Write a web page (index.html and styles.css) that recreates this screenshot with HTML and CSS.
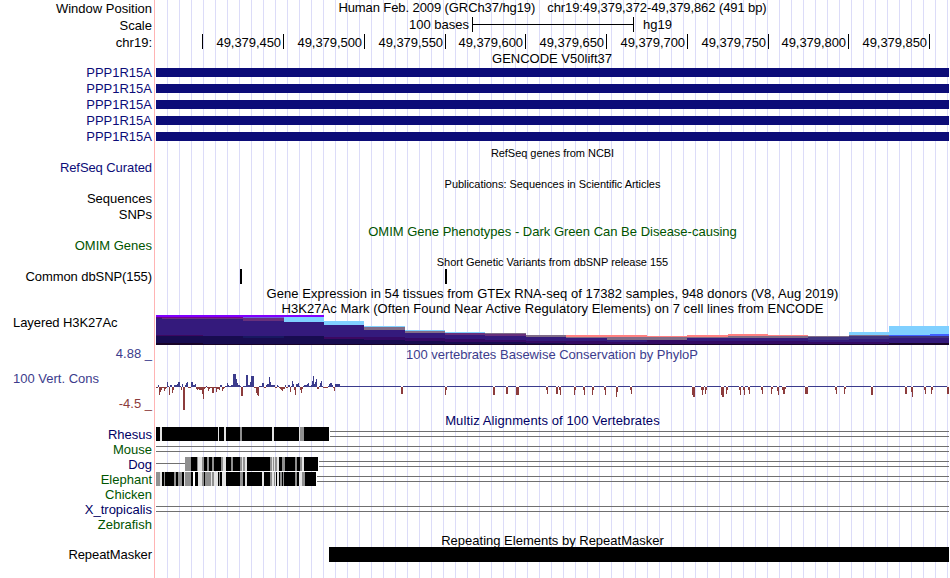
FILE: index.html
```
<!DOCTYPE html>
<html lang="en">
<head>
  <meta charset="utf-8">
  <title>Human chr19:49,379,372-49,379,862</title>
  <link rel="stylesheet" href="styles.css">
</head>
<body>
  <main class="browser">
    <!-- position and ruler -->
    <div class="row h17"><span class="label">Window Position</span><div class="track title position"><span>Human Feb. 2009 (GRCh37/hg19)</span><span>chr19:49,379,372-49,379,862 (491 bp)</span></div></div>
    <div class="row h17"><span class="label">Scale</span><div class="track scale"><span>100 bases</span><i class="scale-bar"></i><span>hg19</span></div></div>
    <div class="row h17"><span class="label">chr19:</span><div class="track ruler" id="ruler"></div></div>

    <!-- genes -->
    <div class="row h13"><span class="label"></span><div class="track title gencode">GENCODE V50lift37</div></div>
    <div class="row h16 gene"><span class="label">PPP1R15A</span><div class="track"><i class="exon"></i></div></div>
    <div class="row h16 gene"><span class="label">PPP1R15A</span><div class="track"><i class="exon"></i></div></div>
    <div class="row h16 gene"><span class="label">PPP1R15A</span><div class="track"><i class="exon"></i></div></div>
    <div class="row h16 gene"><span class="label">PPP1R15A</span><div class="track"><i class="exon"></i></div></div>
    <div class="row h16 gene"><span class="label">PPP1R15A</span><div class="track"><i class="exon"></i></div></div>
    <div class="row h16"><span class="label"></span><div class="track title small">RefSeq genes from NCBI</div></div>
    <div class="row h15 gene"><span class="label tight">RefSeq Curated</span><div class="track"></div></div>
    <div class="row h16"><span class="label"></span><div class="track title small">Publications: Sequences in Scientific Articles</div></div>
    <div class="row h15"><span class="label">Sequences</span><div class="track"></div></div>
    <div class="row h16"><span class="label">SNPs</span><div class="track"></div></div>
    <div class="row h16 green"><span class="label"></span><div class="track title low-title">OMIM Gene Phenotypes - Dark Green Can Be Disease-causing</div></div>
    <div class="row h15 green"><span class="label">OMIM Genes</span><div class="track"></div></div>
    <div class="row h16"><span class="label"></span><div class="track title small">Short Genetic Variants from dbSNP release 155</div></div>
    <div class="row h15"><span class="label tight">Common dbSNP(155)</span><div class="track snps"><i></i><i></i></div></div>
    <div class="row h16"><span class="label"></span><div class="track title low-title wide">Gene Expression in 54 tissues from GTEx RNA-seq of 17382 samples, 948 donors (V8, Aug 2019)</div></div>
    <div class="row h15"><span class="label"></span><div class="track title low-title wide">H3K27Ac Mark (Often Found Near Active Regulatory Elements) on 7 cell lines from ENCODE</div></div>

    <!-- signal tracks -->
    <div class="row h30"><span class="label left">Layered H3K27Ac</span><svg class="plot" id="layers" width="794" height="30" viewBox="156 315 794 30"></svg></div>
    <div class="row h18 cons"><span class="label">4.88 _</span><div class="track title low-title phylop-title">100 vertebrates Basewise Conservation by PhyloP</div></div>
    <div class="row h50 cons">
      <div class="label cons-label"><span class="name">100 Vert. Cons</span><span class="low">-4.5 _</span></div>
      <svg class="plot" id="phylop" width="794" height="50" viewBox="156 363 794 50"></svg>
    </div>

    <!-- alignments -->
    <div class="row h14 navy"><span class="label"></span><div class="track title multiz">Multiz Alignments of 100 Vertebrates</div></div>
    <div class="row h15 navy"><span class="label">Rhesus</span><svg class="plot align" data-species="rhesus" width="794" height="15" viewBox="156 0 794 15"></svg></div>
    <div class="row h15 green"><span class="label">Mouse</span><svg class="plot align" data-species="mouse" width="794" height="15" viewBox="156 0 794 15"></svg></div>
    <div class="row h15 navy"><span class="label">Dog</span><svg class="plot align" data-species="dog" width="794" height="15" viewBox="156 0 794 15"></svg></div>
    <div class="row h15 green"><span class="label">Elephant</span><svg class="plot align" data-species="elephant" width="794" height="15" viewBox="156 0 794 15"></svg></div>
    <div class="row h15 green"><span class="label">Chicken</span><div class="track"></div></div>
    <div class="row h15 navy"><span class="label">X_tropicalis</span><svg class="plot align" data-species="frog" width="794" height="15" viewBox="156 0 794 15"></svg></div>
    <div class="row h15 green"><span class="label">Zebrafish</span><div class="track"></div></div>
    <div class="row h15"><span class="label"></span><div class="track title low-title">Repeating Elements by RepeatMasker</div></div>
    <div class="row h15"><span class="label tight">RepeatMasker</span><div class="track"><i class="repeat-bar"></i></div></div>
  </main>
  <script src="tracks.js"></script>
</body>
</html>
```
FILE: styles.css
```
* {
  box-sizing: border-box;
}

body {
  margin: 0;
  background: white;
  font-family: "Liberation Sans", Arial, sans-serif;
  font-size: 13px;
  color: black;
}

.browser {
  width: 950px;
  height: 578px;
  overflow: hidden;
  /* red edge, then a guide every 12px */
  background:
    linear-gradient(#ffb4b4, #ffb4b4) 154px 0 / 1px 100% no-repeat,
    repeating-linear-gradient(to right, #dcdcf8 0, #dcdcf8 1px, transparent 1px, transparent 12px) 167px 0 / 782px 100% no-repeat;
}

.row {
  display: grid;
  grid-template-columns: 152px 794px;
  column-gap: 4px;
  white-space: nowrap;
}

.h13 { height: 13px; line-height: 15px; }
.h14 { height: 14px; line-height: 15px; }
.h15 { height: 15px; line-height: 15px; }
.h16 { height: 16px; line-height: 17px; }
.h17 { height: 17px; line-height: 17px; }
.h18 { height: 18px; line-height: 18px; }
.h30 { height: 30px; }
.h50 { height: 50px; }

.label {
  text-align: right;
}

.tight {
  letter-spacing: -0.08px;
}

.title {
  text-align: center;
  padding-right: 1px;
}

.small {
  font-size: 11px;
  line-height: 18px;
  letter-spacing: -0.04px;
}

.low-title { line-height: 19px; }
.h15 .low-title { line-height: 17px; }
.wide { letter-spacing: 0.05px; }
.multiz { letter-spacing: 0.1px; }
.gencode { padding-right: 2px; }
.phylop-title { padding-right: 2px; }

.navy { color: #000064; }
.green { color: #005400; }
.gene { color: #0c0c78; }
.cons { color: #3c3c8c; }

.position {
  display: flex;
  justify-content: center;
  gap: 12px;
  line-height: 15px;
  letter-spacing: -0.09px;
}

.scale {
  display: flex;
  padding-left: 253px;
  line-height: 15px;
}

.scale-bar {
  width: 162px;
  height: 15px;
  margin: 0 9px 0 3px;
  border: solid black;
  border-width: 0 1px;
  background: linear-gradient(black, black) 0 7px / 100% 1px no-repeat;
}

.ruler {
  display: flex;
}

.tick {
  text-align: right;
  line-height: 17px;
  height: 15px;
  padding-right: 2px;
  border-right: 1px solid black;
  letter-spacing: -0.06px;
}

.exon {
  display: block;
  width: 793px;
  height: 9px;
  margin-top: 4px;
  background: #0c0c78;
}

.snps {
  display: flex;
  padding-left: 84px;
  gap: 203px;
}

.snps i {
  width: 2px;
  height: 15px;
  background: black;
}

.left {
  text-align: left;
  padding-left: 13px;
  letter-spacing: -0.07px;
}

.plot {
  display: block;
  shape-rendering: crispEdges;
}

.cons-label {
  display: flex;
  flex-direction: column;
  padding-left: 13px;
}

.name {
  text-align: left;
  line-height: 15px;
  margin-top: 8px;
}

.low {
  line-height: 15px;
  margin-top: 10px;
  color: #8c3c3c;
}

.repeat-bar {
  display: block;
  width: 620px;
  height: 15px;
  margin-left: 173px;
  background: black;
}
```
FILE: tracks.js
```
const NS = 'http://www.w3.org/2000/svg';

function rect(svg, x, y, w, h, fill) {
  const r = document.createElementNS(NS, 'rect');
  r.setAttribute('x', x);
  r.setAttribute('y', y);
  r.setAttribute('width', w);
  r.setAttribute('height', h);
  r.setAttribute('fill', fill);
  svg.appendChild(r);
}

// ruler: right edge of each tick
const ticks = [[203, ''], [284, '49,379,450'], [365, '49,379,500'], [446, '49,379,550'], [526, '49,379,600'],
  [607, '49,379,650'], [688, '49,379,700'], [769, '49,379,750'], [849, '49,379,800'], [930, '49,379,850']];
let last = 156;
for (const [x, text] of ticks) {
  const t = document.createElement('span');
  t.className = 'tick';
  t.style.width = (x - last) + 'px';
  t.textContent = text;
  document.getElementById('ruler').appendChild(t);
  last = x;
}

// H3K27Ac: [start, [top, color], ...], every band runs down to the next one
const layers = document.getElementById('layers');
const bands = [
  [156, [315, '#8000ff'], [317, '#6c0080'], [318, '#341a7c'], [335, '#3c0860'], [336, '#180c50'], [343, '#180428']],
  [162, [315, '#8000ff'], [317, '#780090'], [318, '#68307c'], [319, '#341a7c'], [335, '#3c0860'], [336, '#180c50'], [343, '#180428']],
  [203, [315, '#8000ff'], [317, '#780090'], [318, '#68307c'], [319, '#341a7c'], [336, '#180c50'], [344, '#180428']],
  [243, [315, '#8000ff'], [317, '#7060d8'], [318, '#68307c'], [321, '#341a7c'], [336, '#181860'], [338, '#180c50'], [344, '#180428']],
  [284, [315, '#8000ff'], [317, '#80d0ff'], [322, '#341a7c'], [336, '#180c50'], [344, '#180428']],
  [324, [321, '#80d0ff'], [325, '#341a7c'], [337, '#3c0860'], [339, '#180c50'], [344, '#180428']],
  [364, [326, '#80d0ff'], [327, '#806c88'], [330, '#341a7c'], [337, '#340a64'], [340, '#180c50'], [344, '#180428']],
  [405, [330, '#80d0ff'], [331, '#806c88'], [333, '#341a7c'], [338, '#340a64'], [341, '#180c50'], [344, '#180428']],
  [445, [332, '#80d0ff'], [333, '#68307c'], [335, '#341a7c'], [339, '#340a64'], [342, '#180c50'], [344, '#180428']],
  [485, [333, '#806c88'], [334, '#68307c'], [336, '#341a7c'], [340, '#340a64'], [342, '#180c50'], [344, '#180428']],
  [526, [335, '#806c88'], [337, '#341a7c'], [341, '#340a64'], [343, '#180c50'], [344, '#180428']],
  [566, [335, '#ff8080'], [337, '#806c88'], [338, '#341a7c'], [341, '#340a64'], [344, '#180428']],
  [607, [335, '#ff8080'], [337, '#806c88'], [340, '#341a7c'], [342, '#340a64'], [344, '#180428']],
  [647, [336, '#ff8080'], [337, '#806c88'], [340, '#340a64'], [344, '#180428']],
  [687, [335, '#ff8080'], [337, '#806c88'], [338, '#341a7c'], [341, '#340a64'], [344, '#180428']],
  [728, [334, '#ff8080'], [336, '#806c88'], [338, '#341a7c'], [341, '#340a64'], [344, '#180428']],
  [768, [335, '#ff8080'], [336, '#806c88'], [338, '#341a7c'], [341, '#340a64'], [344, '#180428']],
  [808, [336, '#806c88'], [337, '#403480'], [340, '#341a7c'], [342, '#340a64'], [344, '#180428']],
  [849, [332, '#80d0ff'], [335, '#806c88'], [336, '#403480'], [339, '#341a7c'], [342, '#340a64'], [344, '#180428']],
  [889, [326, '#80d0ff'], [335, '#4060ff'], [336, '#403480'], [338, '#341a7c'], [343, '#180428']],
  [930, [326, '#80d0ff'], [334, '#4060ff'], [336, '#403480'], [338, '#341a7c'], [343, '#180428']],
  [949]
];
for (let i = 0; i < bands.length - 1; i++) {
  const [x, ...stack] = bands[i];
  for (const [top, color] of stack) {
    rect(layers, x, top, bands[i + 1][0] - x, 345 - top, color);
  }
}

// PhyloP, one value per pixel
const scores = [
  -1, -1, 2, -8, -5, -3, -1, -1, -4, -2, -1, 5, 1, -8, 2, 2, -6, -3, 2, 2, 2, 3, 5, 5, 1, -3, 3, -23, -23, 2, 4, 5,
  -1, -1, -1, 5, 5, 2, 2, 3, -2, -3, -2, -3, -3, -3, -7, -12, -2, -1, 1, -1, -4, -2, -1, -1, -6, -6, -1, -1, -5, -2,
  -2, -3, 2, 2, -4, -2, -1, 1, 1, 4, 2, 1, 1, 2, 2, 13, 13, 13, 8, 4, 2, 2, 1, -9, -9, 1, 1, 1, 12, 12, 2, 2,
  5, 11, 11, 11, -1, -1, -6, -8, -9, 1, 1, 1, 4, 4, -1, -1, 2, 3, 3, 10, 5, 2, 2, 2, 2, -1, -1, 2, 1, -1, -2, -3, -4,
  -2, -2, 2, -1, -1, 2, 2, -5, 1, 6, 3, -3, -8, 3, 3, 4, 1, -3, -6, -2, 1, 2, 2, 2, 3, 4, 1, 1, 2, 6, 11, 3, 5, 8,
  -2, -2, 1, 4, 6, 1, -1, -1, -1, -1, -1, 1, 3, 4, 4, 2, -1, -4, 3, 3, 3, 3, 3
];
const drops = {
  401: 7, 402: 7, 445: 8, 446: 3, 493: 8, 494: 8, 506: 7, 507: 7, 516: 8, 517: 8, 518: 8, 546: 3, 547: 7,
  556: 7, 557: 7, 559: 3, 560: 8, 574: 8, 575: 3, 583: 3, 584: 8, 592: 8, 593: 3, 604: 3, 605: 8, 616: 10, 617: 5,
  630: 3, 631: 7, 692: 8, 693: 10, 694: 10, 701: 3, 702: 8, 703: 3, 705: 7, 706: 3, 721: 8, 722: 10, 723: 10,
  726: 7, 727: 3, 739: 3, 740: 8, 743: 3, 744: 8, 748: 3, 749: 7, 761: 3, 762: 7, 771: 7, 772: 2, 777: 4, 778: 8,
  782: 3, 783: 7, 784: 7, 785: 2, 805: 7, 806: 7, 807: 7, 835: 3, 836: 7, 844: 7, 845: 2, 871: 8, 872: 8,
  905: 7, 906: 7, 911: 5, 912: 10, 924: 3, 925: 7, 931: 7, 932: 3, 947: 7, 948: 7
};
const phylop = document.getElementById('phylop');
for (let x = 156; x < 949; x++) {
  const v = x - 156 < scores.length ? scores[x - 156] : (-drops[x] || 1);
  if (v > 0) rect(phylop, x, 387 - v, 1, v, '#3c3c8c');
  else rect(phylop, x, 387, 1, -v, '#8c3c3c');
}

// alignments: block [from, to], stripes [x, width, shade], gap lines
const G = '#909090', L = '#e4e4e4', W = '#ffffff';
const species = {
  rhesus: { block: [156, 329], gap: 330, stripes: [[160, 2, L], [218, 1, L], [224, 2, L], [240, 2, G], [272, 2, L], [299, 1, L], [300, 4, G]] },
  mouse: { gap: 156 },
  dog: { line: [156, 185], block: [185, 318], gap: 319, stripes: [
    [185, 6, G], [197, 1, G], [198, 4, L], [202, 2, G], [207, 2, G], [212, 2, G], [221, 2, G], [223, 3, L], [231, 2, G],
    [240, 2, G], [242, 1, L], [243, 2, G], [245, 2, L], [270, 2, G], [272, 1, L], [273, 1, G], [274, 1, L], [275, 2, G], [277, 2, L],
    [282, 3, G], [295, 2, G], [300, 2, G], [302, 2, L]] },
  elephant: { block: [156, 316], gap: 317, stripes: [
    [156, 4, G], [160, 2, L], [164, 1, G], [174, 2, G], [178, 4, G], [184, 1, L], [185, 6, G], [193, 2, W], [198, 4, L], [202, 2, G],
    [205, 6, G], [211, 1, L], [212, 2, G], [214, 4, L], [219, 1, G], [222, 2, L], [224, 2, L], [240, 3, G], [245, 2, L],
    [262, 2, L], [270, 2, G], [272, 2, L], [274, 1, G], [275, 1, L], [277, 2, L], [280, 2, G], [283, 1, G], [295, 2, G], [299, 3, L], [302, 3, G]] },
  frog: { gap: 156 }
};
for (const svg of document.querySelectorAll('.align')) {
  const s = species[svg.dataset.species];
  if (s.line) rect(svg, s.line[0], 6, s.line[1] - s.line[0], 1, '#707070');
  if (s.block) rect(svg, s.block[0], 0, s.block[1] - s.block[0], 14, 'black');
  for (const [x, w, fill] of s.stripes || []) rect(svg, x, 0, w, 14, fill);
  rect(svg, s.gap, 4, 949 - s.gap, 1, '#707070');
  rect(svg, s.gap, 9, 949 - s.gap, 1, '#707070');
}
```
